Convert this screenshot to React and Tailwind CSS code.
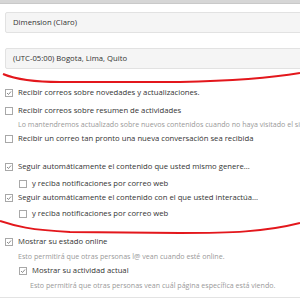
import React from "react";

function Box({ checked }) {
  return (
    <span className="flex h-[8px] w-[8px] shrink-0 items-center justify-center border border-[#a8a8a8] bg-white">
      {checked && (
        <svg width="6" height="6" viewBox="0 0 6 6">
          <path d="M1 3 L2.5 4.5 L5 1.5" fill="none" stroke="#8a8a8a" strokeWidth="1" />
        </svg>
      )}
    </span>
  );
}

function Row({ checked, children, indent, className = "" }) {
  return (
    <div className={`flex h-[12px] items-center gap-[5px] whitespace-nowrap text-[7.7px] text-[#333] ${indent ? "pl-[19px]" : "pl-[5px]"} ${className}`}>
      <Box checked={checked} />
      <span>{children}</span>
    </div>
  );
}

function Desc({ children, indent, className = "" }) {
  return (
    <div className={`flex h-[10px] items-center whitespace-nowrap text-[7.1px] text-[#999] ${indent ? "pl-[30px]" : "pl-[18px]"} ${className}`}>
      {children}
    </div>
  );
}

export default function App() {
  return (
    <div className="relative h-[300px] w-[300px] overflow-hidden bg-white" style={{ fontFamily: '"Open Sans", "Noto Sans", sans-serif' }}>
      <div className="h-[4px] border-b border-[#c9c9c9] bg-[#d6d6d6]" />
      <div className="pl-[5px] pt-[8px]">
        <div className="flex h-[21px] w-[310px] items-center rounded-[2px] border border-[#e2e2e2] bg-[#f5f5f5] pl-[7px] text-[7.7px] text-[#333]">
          Dimension (Claro)
        </div>
        <div className="mt-[15px] flex h-[21px] w-[310px] items-center rounded-[2px] border border-[#e2e2e2] bg-[#f5f5f5] pl-[7px] text-[7.7px] text-[#333]">
          (UTC-05:00) Bogota, Lima, Quito
        </div>
      </div>
      <div className="mt-[18px] flex flex-col">
        <Row checked>Recibir correos sobre novedades y actualizaciones.</Row>
        <Row className="mt-[6px]">Recibir correos sobre resumen de actividades</Row>
        <Desc className="mt-[2px]">Lo mantendremos actualizado sobre nuevos contenidos cuando no haya visitado el sitio web</Desc>
        <Row className="mt-[4px]">Recibir un correo tan pronto una nueva conversación sea recibida</Row>
        <Row checked className="mt-[16px]">Seguir automáticamente el contenido que usted mismo genere...</Row>
        <Row indent className="mt-[5px]">y reciba notificaciones por correo web</Row>
        <Row checked className="mt-[2px]">Seguir automáticamente el contenido con el que usted interactúa...</Row>
        <Row indent className="mt-[4px]">y reciba notificaciones por correo web</Row>
        <Row checked className="mt-[16px]">Mostrar su estado online</Row>
        <Desc className="mt-[3px]">Esto permitirá que otras personas l@ vean cuando esté online.</Desc>
        <Row checked indent className="mt-[4px]">Mostrar su actividad actual</Row>
        <Desc indent className="mt-[3px]">Esto permitirá que otras personas vean cuál página específica está viendo.</Desc>
        <div className="mt-[7px] border-t border-[#e3e3e3]" />
      </div>
      <svg className="pointer-events-none absolute left-0 top-0" width="300" height="300" viewBox="0 0 300 300">
        <path d="M3 74 C15 79 30 82 60 82 L180 82 C230 81 265 79 300 73" fill="none" stroke="#e3171c" strokeWidth="2" />
        <path d="M0 221 C15 226 30 230 70 232 L180 233 C230 233 265 232 300 223" fill="none" stroke="#e3171c" strokeWidth="2" />
      </svg>
    </div>
  );
}
